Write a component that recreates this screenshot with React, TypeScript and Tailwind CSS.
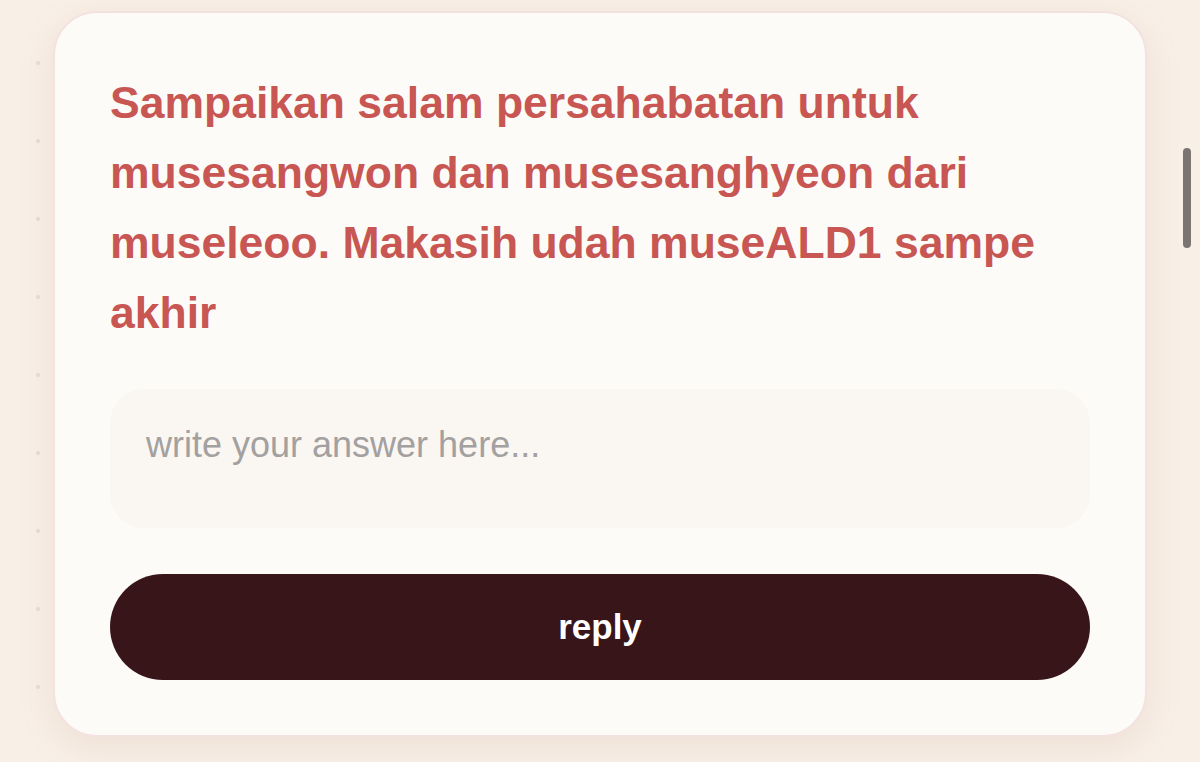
import { useState } from "react";

export default function App() {
    const [answer, setAnswer] = useState("");

    return (
        <div
            className="relative min-h-screen w-full bg-[#f8efe6] bg-[radial-gradient(circle,#e8dbd4_1.5px,transparent_2.5px)] bg-[size:78px_78px] bg-[position:-1px_24px] px-[53px] pt-[11px] pb-[25px]"
            style={{ fontFamily: '"Liberation Sans", Arial, sans-serif' }}
        >
            {/* Question card */}
            <div className="rounded-[44px] border-2 border-[#f3e2df] bg-[#fdfbf8] px-[55px] pt-[55px] pb-[55px] shadow-[0_10px_34px_rgba(190,150,130,0.16)]">
                <h1 className="text-[44.5px] font-bold leading-[70px] text-[#c85652]">
                    Sampaikan salam persahabatan untuk musesangwon dan musesanghyeon dari museleoo. Makasih udah museALD1 sampe akhir
                </h1>

                <textarea
                    value={answer}
                    onChange={(e) => setAnswer(e.target.value)}
                    placeholder="write your answer here..."
                    className="mt-[41px] block h-[139px] w-full resize-none rounded-[34px] bg-[#faf6f2] px-[36px] pt-[29px] text-[36px] leading-[54px] text-[#3a2a2a] outline-none placeholder:text-[#a3a0a0]"
                    style={{ fontFamily: '"Liberation Sans", Arial, sans-serif' }}
                />

                <button className="mt-[46px] block h-[106px] w-full rounded-full bg-[#371519] text-[35px] font-bold text-white">
                    reply
                </button>
            </div>

            {/* overlay scrollbar */}
            <div className="absolute right-[9px] top-[148px] h-[100px] w-[8px] rounded-full bg-[#7a7572]" />
        </div>
    );
}
